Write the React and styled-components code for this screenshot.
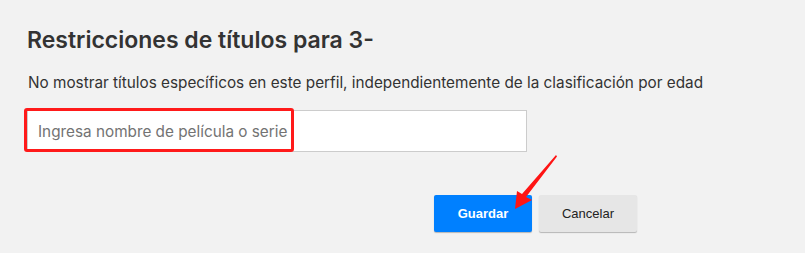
import React from "react";
import styled, { createGlobalStyle } from "styled-components";

const Global = createGlobalStyle`
  html, body { margin: 0; padding: 0; background: #f2f2f2; }
  body { font-family: Inter, "Noto Sans", sans-serif; color: #333; }
  * { box-sizing: border-box; }
`;

const Page = styled.div`
  position: relative;
  width: 805px;
  height: 253px;
  padding: 25px 0 0 27px;
`;

const Title = styled.h2`
  margin: 0;
  font-size: 23px;
  line-height: 30px;
  font-weight: 600;
  color: #333;
`;

const Description = styled.p`
  margin: 18px 0 0 1px;
  font-size: 15.3px;
  line-height: 20px;
  color: #333;
`;

const InputWrap = styled.div`
  position: relative;
  width: 500px;
  margin-top: 17px;
`;

const SearchInput = styled.input`
  display: block;
  width: 100%;
  height: 42px;
  border: 1px solid #ccc;
  background: #fff;
  padding: 0 10px;
  font-family: Inter, "Noto Sans", sans-serif;
  font-size: 15.3px;
  color: #333;
  outline: none;
  &::placeholder { color: #737373; opacity: 1; }
`;

const Highlight = styled.div`
  position: absolute;
  left: -3px;
  top: -2px;
  width: 270px;
  height: 44px;
  border: 3px solid #ff1a1a;
  border-radius: 3px;
  pointer-events: none;
`;

const ButtonRow = styled.div`
  display: flex;
  gap: 7px;
  margin: 43px 0 0 407px;
`;

const Button = styled.button`
  width: 98px;
  height: 37px;
  border: none;
  border-radius: 2px;
  font-family: "Liberation Sans", Arial, sans-serif;
  font-size: 13px;
  font-weight: ${(p) => (p.$primary ? 700 : 400)};
  color: ${(p) => (p.$primary ? "#fff" : "#222")};
  background: ${(p) => (p.$primary ? "#0080ff" : "#e6e6e6")};
  box-shadow: 0 1px 1px rgba(0, 0, 0, 0.25);
  cursor: pointer;
`;

const Arrow = styled.svg`
  position: absolute;
  left: 505px;
  top: 150px;
  width: 60px;
  height: 65px;
  pointer-events: none;
`;

export default function App() {
  return (
    <>
      <Global />
      <Page>
        <Title>Restricciones de títulos para 3-</Title>
        <Description>
          No mostrar títulos específicos en este perfil, independientemente de la clasificación por edad
        </Description>
        <InputWrap>
          <SearchInput placeholder="Ingresa nombre de película o serie" />
          <Highlight />
        </InputWrap>
        <ButtonRow>
          <Button $primary>Guardar</Button>
          <Button>Cancelar</Button>
        </ButtonRow>
        <Arrow viewBox="505 150 60 65">
          <polygon
            points="556,155 557,156.5 526,197 532,200 515,209 517,191 522,194"
            fill="#ff1414"
          />
        </Arrow>
      </Page>
    </>
  );
}
